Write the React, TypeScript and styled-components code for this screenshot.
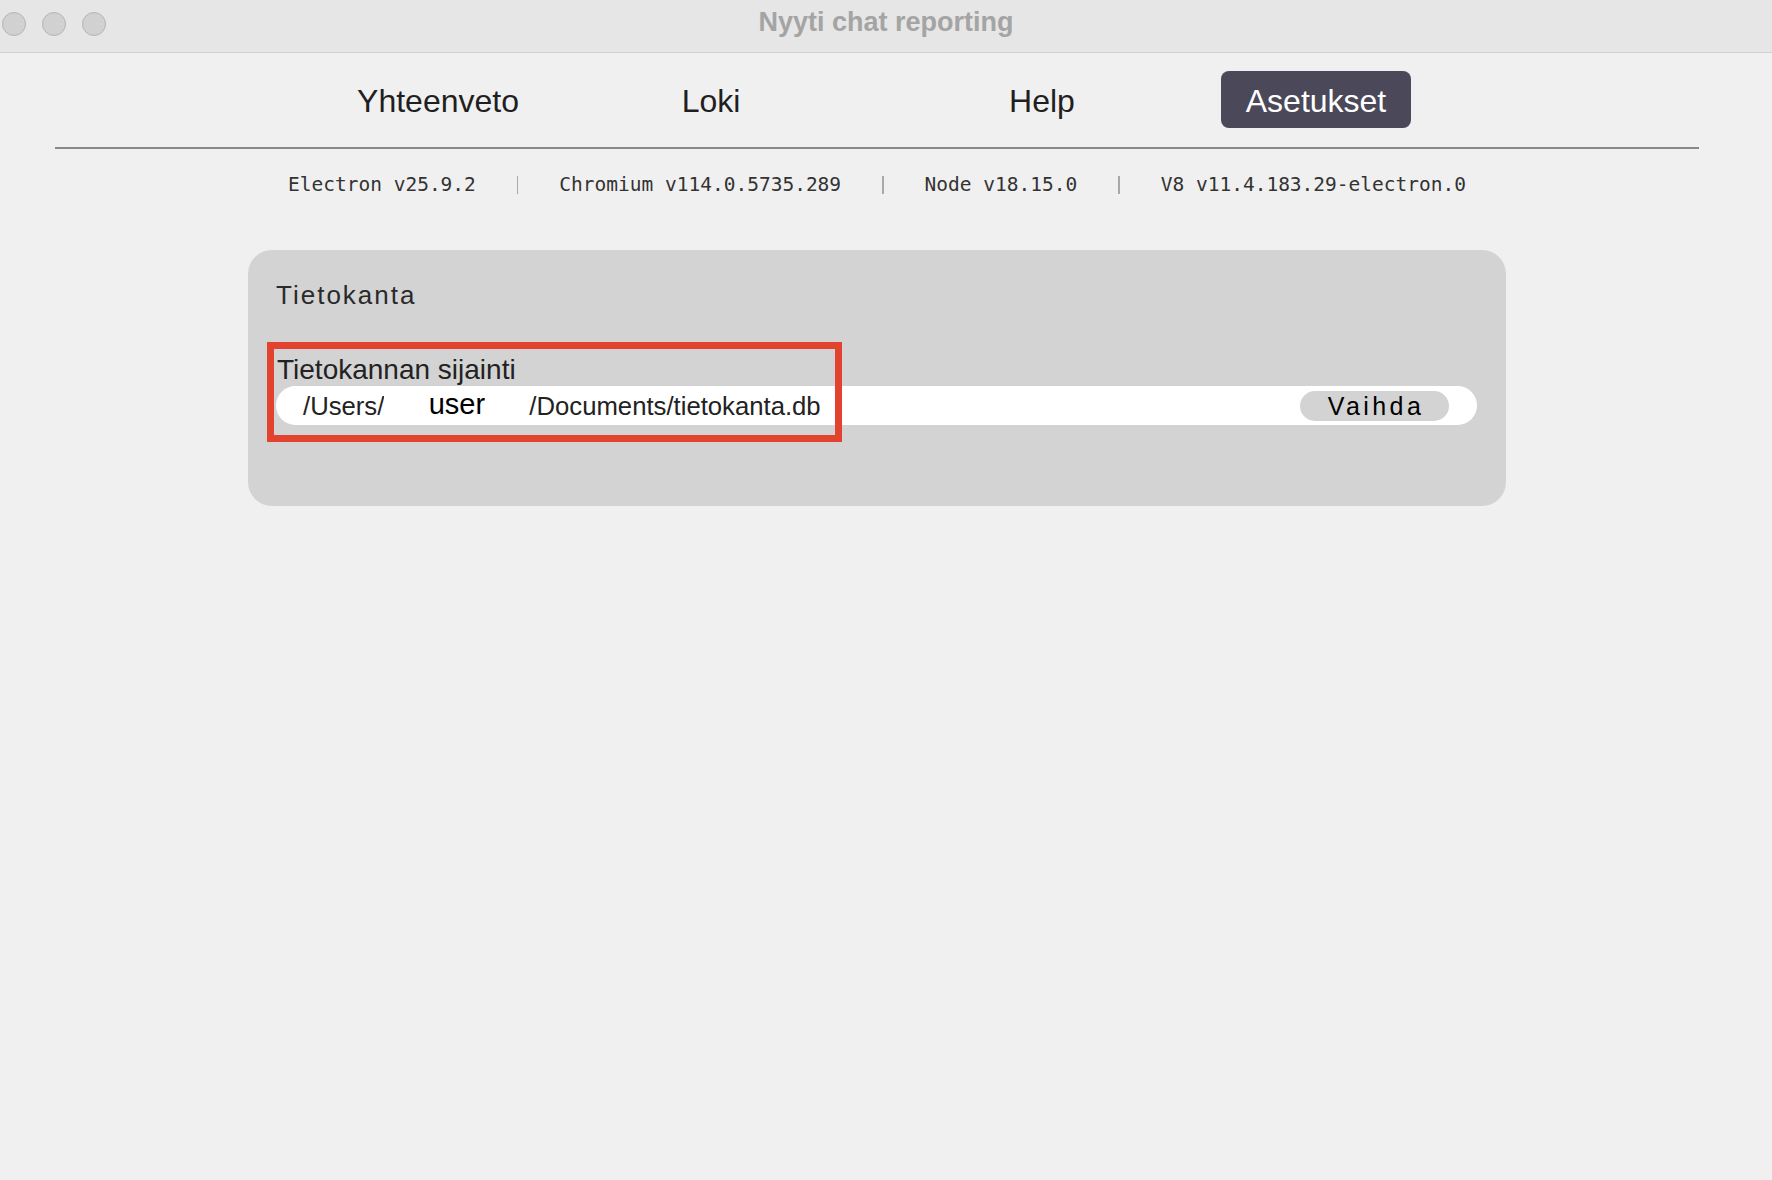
import React from "react";
import styled, { createGlobalStyle } from "styled-components";

const GlobalStyle = createGlobalStyle`
  html, body {
    margin: 0;
    padding: 0;
    background: #f0f0f0;
    font-family: "Liberation Sans", Arial, sans-serif;
  }
  * { box-sizing: border-box; }
`;

const Window = styled.div`
  width: 1772px;
  min-height: 1180px;
  background: #f0f0f0;
  position: relative;
`;

const TitleBar = styled.header`
  height: 53px;
  background: #e6e6e6;
  border-bottom: 1px solid #d0d0d0;
  display: grid;
  grid-template-columns: 1fr auto 1fr;
  align-items: start;
`;

const Lights = styled.div`
  display: flex;
  gap: 16px;
  padding: 12px 0 0 2px;
`;

const Light = styled.span`
  width: 24px;
  height: 24px;
  border-radius: 50%;
  background: #d1d1d1;
  border: 1px solid #b4b4b4;
`;

const WindowTitle = styled.div`
  padding-top: 9px;
  font-size: 27px;
  line-height: 27px;
  font-weight: 700;
  color: #a4a4a4;
`;

const Content = styled.main`
  margin: 0 73px 0 55px;
`;

const Nav = styled.nav`
  display: flex;
  align-items: center;
  padding: 18px 0 19px;
  border-bottom: 2px solid #888888;
`;

const NavItem = styled.button<{ $active?: boolean; $offset: number }>`
  margin-left: ${(p) => p.$offset}px;
  width: 190px;
  height: 57px;
  padding: 3px 0 0;
  display: flex;
  align-items: center;
  justify-content: center;
  border: none;
  border-radius: 8px;
  font-family: "Liberation Sans", Arial, sans-serif;
  font-size: 32px;
  line-height: 32px;
  cursor: pointer;
  background: ${(p) => (p.$active ? "#4a4859" : "transparent")};
  color: ${(p) => (p.$active ? "#ffffff" : "#1f1f1f")};
`;

const Versions = styled.div`
  margin-top: 26px;
  display: flex;
  justify-content: center;
  align-items: center;
  gap: 41px;
  font-family: "DejaVu Sans Mono", "Liberation Mono", monospace;
  font-size: 19.5px;
  line-height: 20px;
  color: #333333;
`;

const Sep = styled.span`
  width: 1.5px;
  height: 18px;
  background: #a8a8a8;
`;

const Card = styled.section`
  position: relative;
  width: 1258px;
  margin: 55px auto 0;
  padding: 30px 29px 81px 28px;
  background: #d3d3d3;
  border-radius: 24px;
`;

const CardTitle = styled.h2`
  margin: 0;
  font-size: 26px;
  line-height: 30px;
  font-weight: 400;
  letter-spacing: 2px;
  color: #2a2a2a;
`;

const FieldLabel = styled.div`
  margin: 44px 0 0 1px;
  font-size: 28px;
  line-height: 32px;
  color: #222222;
`;

const PathField = styled.div`
  height: 39px;
  display: flex;
  align-items: center;
  padding: 0 28px 0 27px;
  background: #ffffff;
  border-radius: 20px;
`;

const PathText = styled.span`
  font-size: 25.7px;
  line-height: 30px;
  color: #222222;
  white-space: nowrap;
`;

const Redact = styled.span`
  width: 145px;
  display: inline-flex;
  justify-content: center;
  margin-top: -4px;
  font-size: 29px;
  line-height: 30px;
  color: #000000;
  background: #ffffff;
`;

const ChangeButton = styled.button`
  margin-left: auto;
  width: 149px;
  height: 30px;
  padding: 0 0 0 3px;
  border: none;
  border-radius: 15px;
  background: #d3d3d3;
  font-family: "Liberation Sans", Arial, sans-serif;
  font-size: 25px;
  line-height: 30px;
  letter-spacing: 3.4px;
  color: #000000;
  cursor: pointer;
`;

const Highlight = styled.div`
  position: absolute;
  left: 19px;
  top: 92px;
  width: 575px;
  height: 100px;
  border: 7px solid #e2432e;
  pointer-events: none;
`;

const navItems = [
  { label: "Yhteenveto", offset: 288 },
  { label: "Loki", offset: 83 },
  { label: "Help", offset: 141 },
  { label: "Asetukset", offset: 84, active: true },
];

const versions = [
  "Electron v25.9.2",
  "Chromium v114.0.5735.289",
  "Node v18.15.0",
  "V8 v11.4.183.29-electron.0",
];

export default function App() {
  return (
    <Window>
      <GlobalStyle />
      <TitleBar>
        <Lights>
          <Light />
          <Light />
          <Light />
        </Lights>
        <WindowTitle>Nyyti chat reporting</WindowTitle>
        <div />
      </TitleBar>
      <Content>
        <Nav>
          {navItems.map((n) => (
            <NavItem key={n.label} $offset={n.offset} $active={n.active}>
              {n.label}
            </NavItem>
          ))}
        </Nav>
        <Versions>
          {versions.map((v, i) => (
            <React.Fragment key={v}>
              {i > 0 && <Sep />}
              <span>{v}</span>
            </React.Fragment>
          ))}
        </Versions>
        <Card>
          <CardTitle>Tietokanta</CardTitle>
          <FieldLabel>Tietokannan sijainti</FieldLabel>
          <PathField>
            <PathText>/Users/</PathText>
            <Redact>user</Redact>
            <PathText>/Documents/tietokanta.db</PathText>
            <ChangeButton>Vaihda</ChangeButton>
          </PathField>
          <Highlight />
        </Card>
      </Content>
    </Window>
  );
}
